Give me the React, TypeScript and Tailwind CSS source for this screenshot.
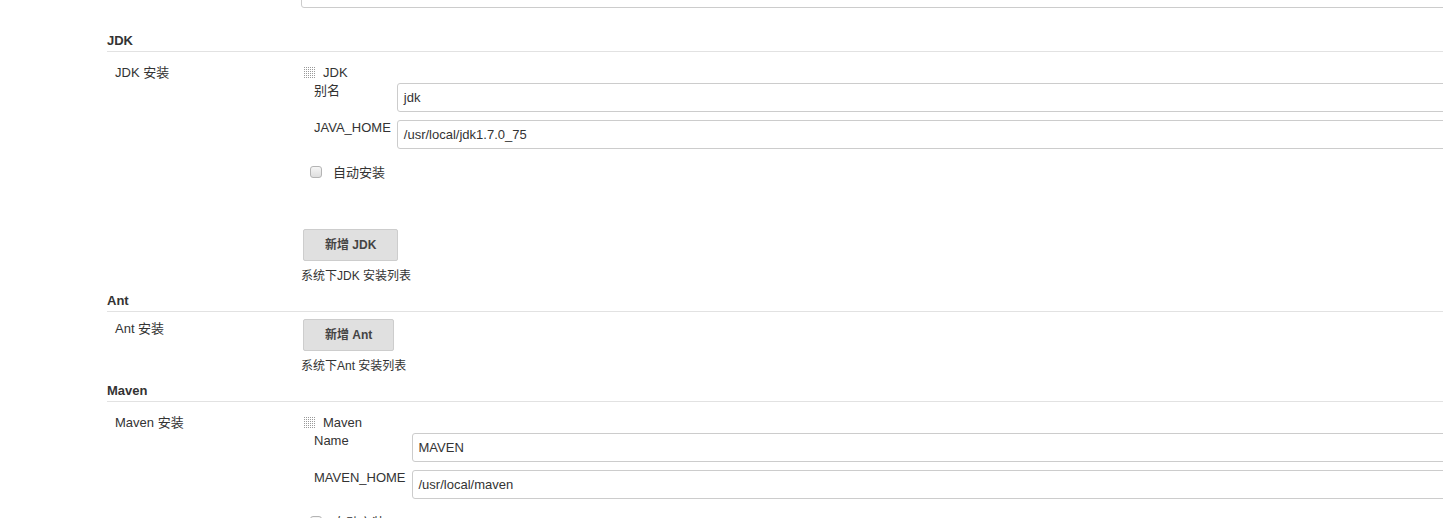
const font = { fontFamily: '"Liberation Sans", Arial, "Noto Sans CJK SC", sans-serif' };

function Handle() {
  const dots = [];
  for (let r = 0; r < 6; r++) {
    for (let c = 0; c < 6; c++) {
      dots.push(<rect key={`${r}-${c}`} x={c * 2} y={r * 2 + 1} width="1" height="1" fill="#9a9a9a" />);
    }
  }
  return (
    <svg width="12" height="13" viewBox="0 0 12 13" className="shrink-0">
      {dots}
    </svg>
  );
}

function SectionHeader({ title, className = "" }: { title: string; className?: string }) {
  return (
    <div className={`border-b border-[#e2e2e2] pt-px pb-[2px] ${className}`}>
      <h2 className="text-[13px] font-bold leading-[16px] text-[#333]">{title}</h2>
    </div>
  );
}

function TextBox({ value }: { value: string }) {
  return (
    <div className="h-[29px] rounded-[3px] border border-[#cccccc] bg-white px-[6px] text-[13px] leading-[27px] text-[#333]">
      {value}
    </div>
  );
}

function AddButton({ label }: { label: string }) {
  return (
    <button className="ml-[2px] h-[32px] rounded-[2px] border border-[#cdcdcd] bg-[#e0e0e0] px-[21px] text-[12px] font-bold text-[#444]">
      {label}
    </button>
  );
}

function Installer({ name, fields }: { name: string; fields: { label: string; value: string }[] }) {
  return (
    <div>
      <div className="flex h-[16px] items-center pl-[3px]">
        <Handle />
        <span className="ml-[7px] translate-y-px text-[13px] leading-[16px]">{name}</span>
      </div>
      <div className="ml-[13px] mt-[3px] grid grid-cols-[auto_1fr] gap-x-[6px] gap-y-[8px]">
        {fields.map((f) => (
          <div key={f.label} className="contents">
            <div className="text-[13px] leading-[16px]">{f.label}</div>
            <TextBox value={f.value} />
          </div>
        ))}
      </div>
      <div className="mt-[15px] flex h-[16px] items-center pl-[9px]">
        <span className="h-[12px] w-[12px] rounded-[3px] border border-[#b4b4b4] bg-gradient-to-b from-[#f6f6f6] to-[#dedede]" />
        <span className="ml-[11px] translate-y-px text-[13px] leading-[16px]">自动安装</span>
      </div>
    </div>
  );
}

export default function App() {
  return (
    <div className="h-[518px] w-full overflow-hidden bg-white text-[#333]" style={font}>
      <div className="w-[1480px] pl-[107px]">
        <div className="ml-[194px] -mt-[21px] h-[29px] rounded-[3px] border border-[#cccccc]" />

        <SectionHeader title="JDK" className="mt-[24px]" />
        <div className="flex pt-[12px]">
          <div className="w-[194px] pl-[8px] pt-px text-[13px] leading-[16px]">JDK 安装</div>
          <div className="flex-1">
            <Installer
              name="JDK"
              fields={[
                { label: "别名", value: "jdk" },
                { label: "JAVA_HOME", value: "/usr/local/jdk1.7.0_75" },
              ]}
            />
            <div className="mt-[49px]">
              <AddButton label="新增 JDK" />
            </div>
            <p className="mt-[7px] text-[12px] leading-[16px]">系统下JDK 安装列表</p>
          </div>
        </div>

        <SectionHeader title="Ant" className="mt-[8px]" />
        <div className="flex">
          <div className="w-[194px] pl-[8px] pt-[9px] text-[13px] leading-[16px]">Ant 安装</div>
          <div className="flex-1 pt-[7px]">
            <AddButton label="新增 Ant" />
            <p className="mt-[7px] text-[12px] leading-[16px]">系统下Ant 安装列表</p>
          </div>
        </div>

        <SectionHeader title="Maven" className="mt-[8px]" />
        <div className="flex pt-[12px]">
          <div className="w-[194px] pl-[8px] pt-px text-[13px] leading-[16px]">Maven 安装</div>
          <div className="flex-1">
            <Installer
              name="Maven"
              fields={[
                { label: "Name", value: "MAVEN" },
                { label: "MAVEN_HOME", value: "/usr/local/maven" },
              ]}
            />
          </div>
        </div>
      </div>
    </div>
  );
}
